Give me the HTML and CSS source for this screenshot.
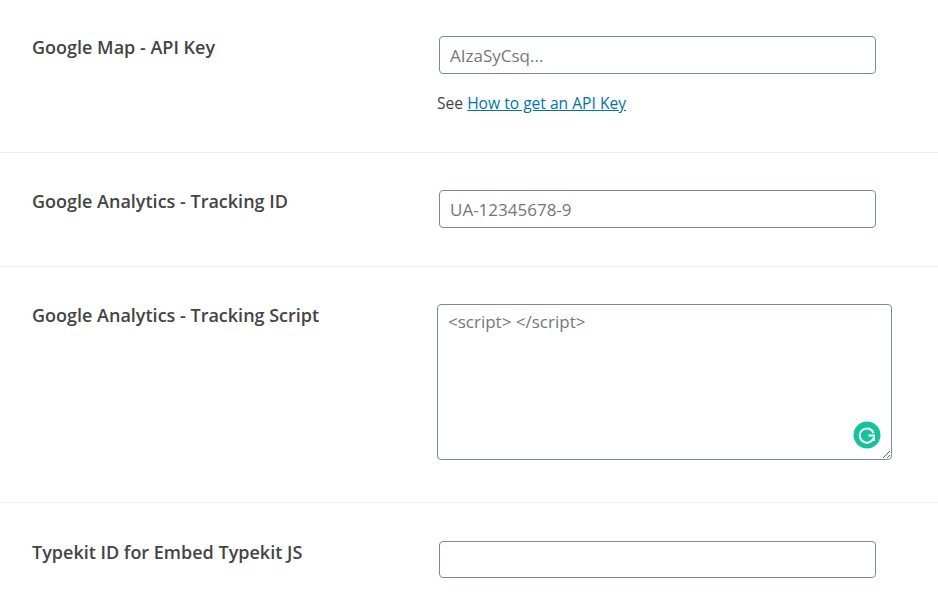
FILE: index.html
```html
<!doctype html>
<html>
<head>
<meta charset="utf-8">
<title>Settings</title>
<link rel="stylesheet" href="styles.css">
</head>

<body>
	<div class="settings">
		<div class="setting-row setting-row-map">
			<label class="setting-label">Google Map - API Key</label>
			<div class="setting-field">
				<input class="setting-input" placeholder="AIzaSyCsq...">
				<p class="setting-note">See <a href="#">How to get an API Key</a></p>
			</div>
		</div>
		<div class="setting-row">
			<label class="setting-label">Google Analytics - Tracking ID</label>
			<div class="setting-field">
				<input class="setting-input" placeholder="UA-12345678-9">
			</div>
		</div>
		<div class="setting-row setting-row-script">
			<label class="setting-label">Google Analytics - Tracking Script</label>
			<div class="setting-field">
				<div class="setting-textarea-wrap">
					<textarea class="setting-textarea" placeholder="<script> </script>"></textarea>
					<svg class="grammarly-badge" viewBox="0 0 28 28" width="28" height="28">
						<circle cx="14" cy="14" r="13.5" fill="#15c39a"/>
						<path d="M20.6 12.2A7.1 7.1 0 1 0 20.4 17.4" fill="none" stroke="#fff" stroke-width="2"/>
						<path d="M15.4 14.6H21V20" fill="none" stroke="#fff" stroke-width="2"/>
					</svg>
				</div>
			</div>
		</div>
		<div class="setting-row setting-row-last">
			<label class="setting-label">Typekit ID for Embed Typekit JS</label>
			<div class="setting-field">
				<input class="setting-input setting-input-short">
			</div>
		</div>
	</div>
</body>
</html>
```

FILE: styles.css
```css
body { margin: 0; font: 14px/1.4 "Open Sans", "Noto Sans", sans-serif; color: #444; background-color: #fff; overflow: hidden; }
.settings { width: 938px; }
.setting-row { display: flex; padding: 37px 0 38px; border-bottom: 1px solid #eee; }
.setting-row-map { padding: 36px 0 37px; }
.setting-row-script { padding-bottom: 42px; }
.setting-row-last { padding-top: 38px; border-bottom: 0 none; }
.setting-label { width: 437px; padding-left: 32px; box-sizing: border-box; font-size: 18px; line-height: 22px; font-weight: 600; color: #444; flex: none; }
.setting-field { flex: none; }
.setting-input { display: block; width: 437px; height: 38px; margin: 0 0 0 2px; padding: 1px 10px 0; box-sizing: border-box; border: 1px solid #7e8993; border-radius: 4px; font: 17px "Open Sans", "Noto Sans", sans-serif; color: #32373c; background-color: #fff; }
.setting-input-short { height: 37px; }
.setting-input::placeholder, .setting-textarea::placeholder { color: #72777c; opacity: 1; }
.setting-note { margin: 17px 0 0; font-size: 15.6px; line-height: 24px; color: #444; }
.setting-note a { color: #0073aa; }
.setting-textarea-wrap { position: relative; width: 455px; height: 156px; }
.setting-textarea { display: block; width: 455px; height: 156px; margin: 0; padding: 5px 10px; box-sizing: border-box; border: 1px solid #7e8993; border-radius: 4px; font: 17px/24px "Open Sans", "Noto Sans", sans-serif; color: #32373c; background-color: #fff; resize: both; }
.grammarly-badge { position: absolute; right: 11px; bottom: 11px; }
```
